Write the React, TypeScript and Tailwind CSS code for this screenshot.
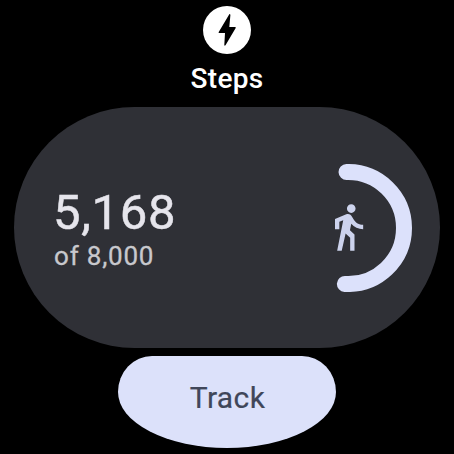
const ring = { r: 56, start: -1.5, end: 183.2 };

function polar(deg: number) {
  const a = (deg * Math.PI) / 180;
  return `${64 + ring.r * Math.sin(a)} ${64 - ring.r * Math.cos(a)}`;
}

function BoltIcon() {
  return (
    <svg viewBox="0 0 48 48" className="size-12" aria-hidden="true">
      <circle cx="24" cy="24" r="24" fill="#fff" />
      <path d="M26.3 8.2 15.6 26.2Q15.3 27 16.2 27H22L21.3 39Q21.6 40.2 22.5 39.2L32.7 22Q33 21.1 32.1 21H26.3L27.4 8.9Q27.1 7.5 26.3 8.2Z" fill="#000" />
    </svg>
  );
}

function StepsRing() {
  return (
    <div className="grid size-32 place-items-center">
      <svg viewBox="0 0 128 128" className="col-start-1 row-start-1 size-32" aria-hidden="true">
        <path
          d={`M${polar(ring.start)} A56 56 0 0 1 ${polar(90)} A56 56 0 0 1 ${polar(ring.end)}`}
          fill="none"
          stroke="#dce1fb"
          strokeWidth="16"
          strokeLinecap="round"
        />
      </svg>
      <svg viewBox="0 0 24 24" className="col-start-1 row-start-1 mb-0.5 size-[52px]" fill="#cdd3ed" aria-hidden="true">
        <path d="M13.5 5.5c1.1 0 2-.9 2-2s-.9-2-2-2-2 .9-2 2 .9 2 2 2zM9.8 8.9L7 23h2.1l1.8-8 2.1 2v6h2v-7.5l-2.1-2 .6-3C14.8 12 16.8 13 19 13v-2c-1.9 0-3.5-1-4.3-2.4l-1-1.6c-.4-.6-1-1-1.7-1-.3 0-.5.1-.8.1L6 8.3V13h2V9.6l1.8-.7" />
      </svg>
    </div>
  );
}

export default function App() {
  return (
    <main className="flex h-[454px] w-[454px] flex-col items-center overflow-hidden bg-black pt-1.5 font-['Roboto',sans-serif]">
      <BoltIcon />
      <h1 className="mt-[9px] h-8 text-[28px] leading-8 font-medium tracking-[0.3px] text-white">Steps</h1>
      <section className="mt-3 flex h-[241px] w-[426px] items-center justify-between rounded-[120.5px] bg-[#2f3036] pr-7 pl-10">
        <div className="flex flex-col pt-[3px]">
          <p className="-ml-px text-[49px] leading-[53px] tracking-[0.7px] text-[#e6e5ec] [-webkit-text-stroke:0.5px_#e6e5ec]">5,168</p>
          <p className="text-[26px] leading-[34px] tracking-[0.8px] text-[#c8c8cd] [-webkit-text-stroke:0.3px_#c8c8cd]">of 8,000</p>
        </div>
        <StepsRing />
      </section>
      <button className="mt-2 h-[92px] w-[218px] rounded-[34px_34px_109px_109px/36px_36px_56px_56px] bg-[#dce1fa] pb-2.5 pl-px text-[30px] tracking-[0.4px] text-[#404659] [-webkit-text-stroke:0.2px_#404659]">
        Track
      </button>
    </main>
  );
}
